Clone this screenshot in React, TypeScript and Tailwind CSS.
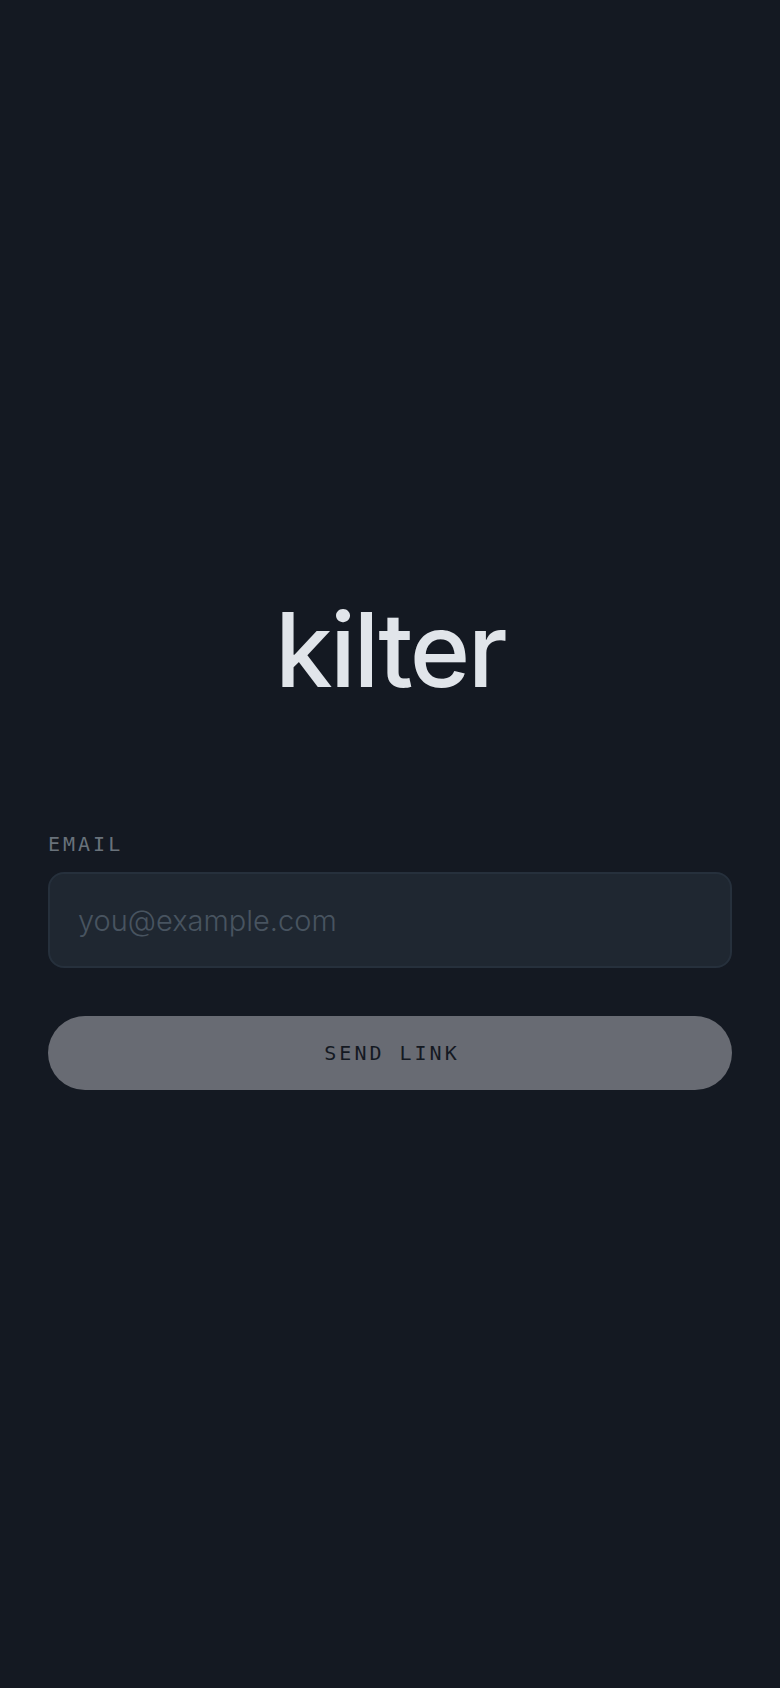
import { useState } from "react";

interface EmailFieldProps {
  value: string;
  onChange: (value: string) => void;
}

function EmailField({ value, onChange }: EmailFieldProps) {
  return (
    <div className="flex flex-col gap-3">
      <label
        htmlFor="email"
        className="font-['DejaVu_Sans_Mono',monospace] text-[20px] leading-8 tracking-[3px] uppercase text-[#69727b]"
      >
        Email
      </label>
      <input
        id="email"
        type="email"
        value={value}
        onChange={(e) => onChange(e.target.value)}
        placeholder="you@example.com"
        className="h-24 w-full rounded-2xl border-2 border-[#26303c] bg-[#1f2731] px-7 text-[29px] font-light text-[#e1e5ea] placeholder:text-[#485460] outline-none focus:border-[#485460]"
      />
    </div>
  );
}

function App() {
  const [email, setEmail] = useState("");

  return (
    <main className="flex min-h-screen flex-col justify-center bg-[#141922] px-12 font-['Inter',sans-serif]">
      <h1 className="mb-[126px] text-center text-[103px] leading-[104px] font-medium tracking-tight text-[#e1e5ea]">
        kilter
      </h1>
      <form className="flex flex-col gap-12" onSubmit={(e) => e.preventDefault()}>
        <EmailField value={email} onChange={setEmail} />
        {/* dimmed until there is an address to send to */}
        <button
          type="submit"
          disabled={!email}
          className="h-[74px] w-full rounded-full bg-[#e1e5ea] pl-1 font-['DejaVu_Sans_Mono',monospace] text-[20px] tracking-[3px] uppercase text-[#141922] disabled:bg-[#686b73]"
        >
          Send link
        </button>
      </form>
    </main>
  );
}

export default App;
